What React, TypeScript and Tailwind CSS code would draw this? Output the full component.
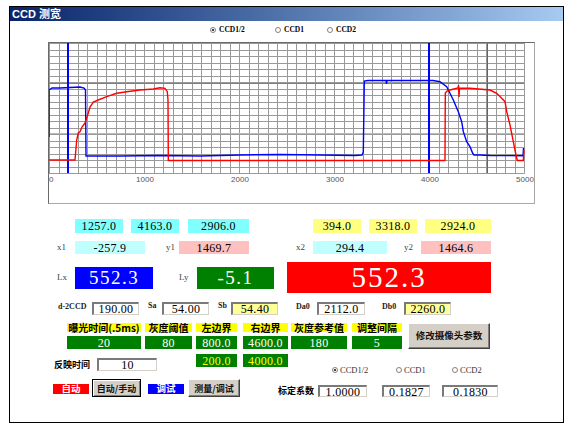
import React from "react";

const bluePts =
  "49,137 49,90 52,88 60,88 70,87.5 80,87 84,88 85.5,90 86,156 120,156 160,155.5 200,156 240,155 280,154.5 320,155 355,155.5 362,155 363.3,152 364.3,81 368,80.5 386,80.5 386.5,84 387,80.5 400,80.5 433,80.5 440,81.7 446.7,86.7 453.3,100 458.3,111.7 461.7,121.7 463.3,131.7 466.7,141.7 470,146.7 472.7,153.3 474,155 480,155 490,155.5 523,155.7 523.5,148";
const redPts =
  "49,160 75,160 76.7,140 78.3,133 80,131.7 82,127 85,123 88.3,113 90,107 93.3,102 98.3,100 106.7,96.7 116.7,93.3 126.7,91.7 140,90 153.3,89 160,87.7 165,88.3 167.3,91.7 168,100 168.3,160.5 300,160.5 445,160.5 445.3,93 447,91 450,90 458,88 458.5,85 459,97 459.5,88 470,88.3 490,90 496.7,93.3 501.7,98.3 505,101.7 506.7,111.7 510,125 513.3,141.7 516,155 517.3,160.5 523.3,160.5 524,150";

function Chart() {
  const vx = Array.from({ length: 51 }, (_, i) => Math.round(49 + i * 9.5) + 0.5);
  const hy = Array.from({ length: 21 }, (_, k) => Math.round(43 + k * 6.5) + 0.5);
  const ticks = [1000, 2000, 3000, 4000, 5000];
  return (
    <svg width={485} height={160} viewBox="49 43 485 160">
      {vx.map((x, i) => (
        <line key={"v" + i} x1={x} x2={x} y1={43} y2={173.5} stroke="#999" strokeWidth={1} />
      ))}
      {hy.map((y, i) => (
        <line key={"h" + i} x1={49} x2={524.5} y1={y} y2={y} stroke="#999" strokeWidth={1} />
      ))}
      <line x1={49} x2={524} y1={83.5} y2={83.5} stroke="#7070ff" strokeWidth={1} />
      <line x1={49} x2={524} y1={133.5} y2={133.5} stroke="#ff9a9a" strokeWidth={1} />
      <line x1={125.5} x2={125.5} y1={43} y2={173} stroke="#ff7070" strokeWidth={1} />
      <line x1={487.5} x2={487.5} y1={43} y2={173} stroke="#5050ff" strokeWidth={1} />
      <line x1={68} x2={68} y1={43} y2={173} stroke="#0000ff" strokeWidth={2} />
      <line x1={429} x2={429} y1={43} y2={173} stroke="#0000ff" strokeWidth={2} />
      <polyline points={bluePts} fill="none" stroke="#0000ff" strokeWidth={1.4} />
      <polyline points={redPts} fill="none" stroke="#ff0000" strokeWidth={1.4} />
      <text x={49} y={182} fontSize={8} fill="#555" fontFamily="Liberation Sans, sans-serif">
        0
      </text>
      {ticks.map((t) => (
        <text
          key={t}
          x={49 + t * 0.095 + 1}
          y={182}
          fontSize={8}
          fill="#555"
          textAnchor="middle"
          fontFamily="Liberation Sans, sans-serif"
        >
          {t}
        </text>
      ))}
    </svg>
  );
}

function Radio({ on, label, top, w }: { on?: boolean; label: string; top?: boolean; w: string }) {
  return (
    <div className={`${w} flex items-center`}>
      <div className="w-[6px] h-[6px] rounded-full border border-[#808080] bg-white flex items-center justify-center">
        {on && <div className="w-[2px] h-[2px] rounded-full bg-black" />}
      </div>
      <span
        className={
          top
            ? "ml-[3px] text-[7.5px] font-bold leading-none"
            : "ml-[2px] text-[8.5px] text-[#333] leading-none"
        }
      >
        {label}
      </span>
    </div>
  );
}

function Edit({ w, bg, children }: { w: string; bg?: string; children: React.ReactNode }) {
  return (
    <div
      className={`${w} h-full ${bg ?? "bg-white"} border-t-2 border-l-2 border-t-[#7a7a7a] border-l-[#7a7a7a] border-b border-r border-b-[#d4d0c8] border-r-[#d4d0c8] flex items-center justify-center text-[12px] tracking-[0.3px] leading-none`}
    >
      {children}
    </div>
  );
}

export default function App() {
  return (
    <div className="w-[571px] h-[430px] bg-white pt-[6px] pl-[9px] font-['Liberation_Serif','Noto_Sans_CJK_SC',serif] text-black">
      <div className="w-[555px] h-[417px] border border-black flex flex-col overflow-hidden">
        <div className="h-[14px] shrink-0 bg-linear-to-r from-[#0a246a] to-[#a6caf0] flex items-center pl-[2px] text-white text-[11px] font-bold leading-none font-['Liberation_Sans','Noto_Sans_CJK_SC',sans-serif]">
          CCD 测宽
        </div>

        {/* radios top */}
        <div className="mt-[4px] h-[9px] flex items-center ml-[200px]">
          <Radio on top label="CCD1/2" w="w-[65px]" />
          <Radio top label="CCD1" w="w-[52px]" />
          <Radio top label="CCD2" w="w-[40px]" />
        </div>

        {/* chart */}
        <div className="mt-[8px] ml-[38px] w-[487px] h-[162px] shrink-0 border border-t-[#6a6a6a] border-l-[#6a6a6a] border-r-[#a8a8a8] border-b-[#a8a8a8] bg-white">
          <Chart />
        </div>

        {/* row C */}
        <div className="mt-[15px] h-[14px] flex text-[12px] tracking-[0.3px] leading-none">
          <div className="ml-[65px] w-[48px] bg-[#80ffff] flex items-center justify-center">1257.0</div>
          <div className="ml-[8px] w-[48px] bg-[#80ffff] flex items-center justify-center">4163.0</div>
          <div className="ml-[9px] w-[61px] bg-[#80ffff] flex items-center justify-center">2906.0</div>
          <div className="ml-[64px] w-[48px] bg-[#ffff80] flex items-center justify-center">394.0</div>
          <div className="ml-[8px] w-[48px] bg-[#ffff80] flex items-center justify-center">3318.0</div>
          <div className="ml-[8px] w-[66px] bg-[#ffff80] flex items-center justify-center">2924.0</div>
        </div>

        {/* row D */}
        <div className="mt-[8px] h-[13px] flex items-center leading-none">
          <div className="ml-[47px] w-[18px] text-[9px] text-[#444]">x1</div>
          <div className="w-[70px] h-full bg-[#c0ffff] flex items-center justify-center text-[12px] tracking-[0.3px]">-257.9</div>
          <div className="ml-[21px] w-[13px] text-[9px] text-[#444]">y1</div>
          <div className="w-[70px] h-full bg-[#ffc0c0] flex items-center justify-center text-[12px] tracking-[0.3px]">1469.7</div>
          <div className="ml-[47px] w-[17px] text-[9px] text-[#444]">x2</div>
          <div className="w-[74px] h-full bg-[#c0ffff] flex items-center justify-center text-[12px] tracking-[0.3px]">294.4</div>
          <div className="ml-[17px] w-[17px] text-[9px] text-[#444]">y2</div>
          <div className="w-[70px] h-full bg-[#ffc0c0] flex items-center justify-center text-[12px] tracking-[0.3px]">1464.6</div>
        </div>

        {/* row E */}
        <div className="mt-[8px] h-[31px] flex items-center leading-none">
          <div className="ml-[47px] w-[18px] text-[9px] text-[#444]">Lx</div>
          <div className="w-[78px] h-[22px] bg-[#0000ff] text-white flex items-center justify-center text-[19px] tracking-[1.5px]">552.3</div>
          <div className="ml-[26px] w-[18px] text-[9px] text-[#444]">Ly</div>
          <div className="w-[77px] h-[22px] bg-[#008000] text-white flex items-center justify-center text-[19px] tracking-[1.5px]">-5.1</div>
          <div className="ml-[13px] w-[204px] h-[31px] bg-[#ff0000] text-white flex items-center justify-center text-[29px] tracking-[2px]">552.3</div>
        </div>

        {/* row F */}
        <div className="mt-[9px] h-[13px] flex items-start leading-none">
          <div className="ml-[48px] w-[34px] mt-[1px] text-[8px] font-bold text-[#222]">d-2CCD</div>
          <Edit w="w-[47px]">190.00</Edit>
          <div className="ml-[9px] w-[14px] text-[8px] font-bold text-[#222]">Sa</div>
          <Edit w="w-[47px]">54.00</Edit>
          <div className="ml-[9px] w-[13px] text-[8px] font-bold text-[#222]">Sb</div>
          <Edit w="w-[47px]" bg="bg-[#ffff99]">54.40</Edit>
          <div className="ml-[18px] w-[21px] mt-[1px] text-[8px] font-bold text-[#222]">Da0</div>
          <Edit w="w-[48px]">2112.0</Edit>
          <div className="ml-[17px] w-[22px] mt-[1px] text-[8px] font-bold text-[#222]">Db0</div>
          <Edit w="w-[47px]" bg="bg-[#ffff99]">2260.0</Edit>
        </div>

        {/* row G1: parameter table + button */}
        <div className="mt-[8px] h-[26px] flex items-start leading-none">
          <div className="ml-[57px] flex flex-col gap-[4px]">
            <div className="h-[9px] flex font-['Noto_Sans_CJK_SC',sans-serif] font-bold text-[10px]">
              <div className="w-[74px] bg-[#ffff00] flex items-center justify-center">曝光时间(.5ms)</div>
              <div className="ml-[4px] w-[47px] bg-[#ffff00] flex items-center justify-center">灰度阈值</div>
              <div className="ml-[4px] w-[41px] bg-[#ffff00] flex items-center justify-center">左边界</div>
              <div className="ml-[6px] w-[45px] bg-[#ffff00] flex items-center justify-center">右边界</div>
              <div className="ml-[3px] w-[56px] bg-[#ffff00] flex items-center justify-center">灰度参考值</div>
              <div className="ml-[5px] w-[50px] bg-[#ffff00] flex items-center justify-center">调整间隔</div>
            </div>
            <div className="h-[13px] flex text-white text-[12px] tracking-[0.3px]">
              <div className="w-[74px] bg-[#008000] flex items-center justify-center">20</div>
              <div className="ml-[4px] w-[47px] bg-[#008000] flex items-center justify-center">80</div>
              <div className="ml-[4px] w-[41px] bg-[#008000] flex items-center justify-center">800.0</div>
              <div className="ml-[6px] w-[45px] bg-[#008000] flex items-center justify-center">4600.0</div>
              <div className="ml-[3px] w-[56px] bg-[#008000] flex items-center justify-center">180</div>
              <div className="ml-[5px] w-[50px] bg-[#008000] flex items-center justify-center">5</div>
            </div>
          </div>
          <button className="ml-[6px] w-[82px] h-[26px] bg-[#d4d0c8] border border-t-white border-l-white border-r-[#404040] border-b-[#404040] shadow-[inset_-1px_-1px_0_#808080] font-['Noto_Sans_CJK_SC',sans-serif] font-bold text-[9.5px] text-[#111]">
            修改摄像头参数
          </button>
        </div>

        {/* row G2 */}
        <div className="mt-[5px] h-[20px] flex items-start leading-none">
          <div className="ml-[44px] mt-[6px] w-[43px] font-['Noto_Sans_CJK_SC',sans-serif] font-bold text-[9px]">反映时间</div>
          <div className="mt-[4px] h-[13px] flex">
            <Edit w="w-[60px]">10</Edit>
          </div>
          <div className="ml-[39px] w-[41px] h-[13px] bg-[#008000] text-[#ffff00] flex items-center justify-center text-[12px] tracking-[0.3px]">200.0</div>
          <div className="ml-[6px] w-[45px] h-[13px] bg-[#008000] text-[#ffff00] flex items-center justify-center text-[12px] tracking-[0.3px]">4000.0</div>
          <div className="ml-[44px] mt-[12px] flex items-center">
            <Radio on label="CCD1/2" w="w-[64px]" />
            <Radio label="CCD1" w="w-[56px]" />
            <Radio label="CCD2" w="w-[40px]" />
          </div>
        </div>

        {/* row H */}
        <div className="mt-[5px] h-[18px] flex items-start leading-none font-['Noto_Sans_CJK_SC',sans-serif] font-bold">
          <div className="ml-[43px] mt-[5px] w-[36px] h-[10px] bg-[#ff0000] text-white text-[9.5px] flex items-center justify-center">自动</div>
          <button className="ml-[3px] w-[49px] h-[18px] bg-[#d4d0c8] border border-black shadow-[inset_1px_1px_0_#ffffff,inset_-1px_-1px_0_#808080] text-[9px] text-[#111]">
            自动/手动
          </button>
          <div className="ml-[7px] mt-[5px] w-[36px] h-[10px] bg-[#0000ff] text-white text-[9.5px] flex items-center justify-center">调试</div>
          <button className="ml-[4px] w-[52px] h-[18px] bg-[#d4d0c8] border border-t-white border-l-white border-r-[#404040] border-b-[#404040] shadow-[inset_-1px_-1px_0_#808080] text-[9px] text-[#111]">
            测量/调试
          </button>
          <div className="ml-[38px] mt-[7px] w-[37px] text-[9px]">标定系数</div>
          <div className="ml-[3px] mt-[6px] h-[12px] flex font-['Liberation_Serif',serif] font-normal">
            <Edit w="w-[49px]">1.0000</Edit>
          </div>
          <div className="ml-[15px] mt-[6px] h-[12px] flex font-['Liberation_Serif',serif] font-normal">
            <Edit w="w-[48px]">0.1827</Edit>
          </div>
          <div className="ml-[12px] mt-[6px] h-[12px] flex font-['Liberation_Serif',serif] font-normal">
            <Edit w="w-[56px]">0.1830</Edit>
          </div>
        </div>
      </div>
    </div>
  );
}
